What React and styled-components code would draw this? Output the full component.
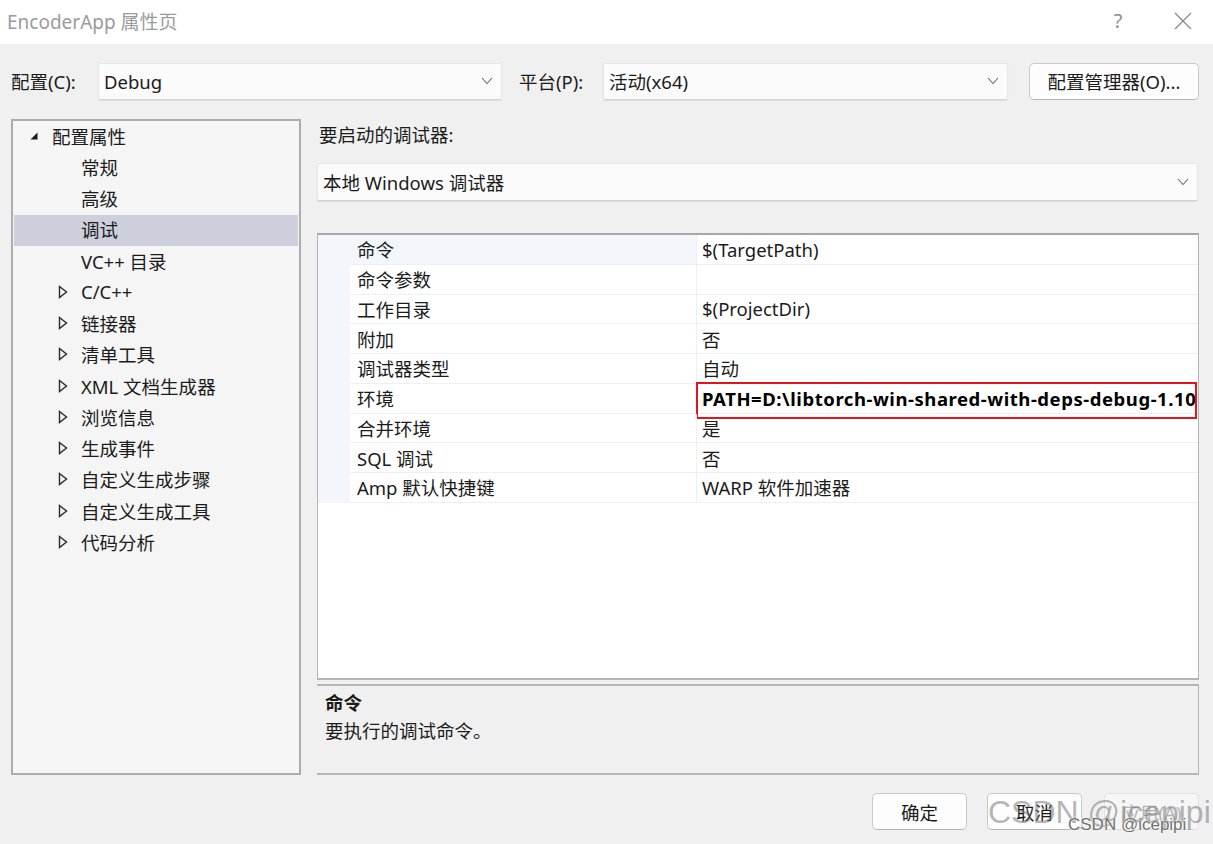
import React from 'react';
import styled, { createGlobalStyle } from 'styled-components';

const GlobalStyle = createGlobalStyle`
  html, body { margin: 0; padding: 0; background: #f0f0f0; }
  body { font-family: "Noto Sans", "Noto Sans CJK SC", sans-serif; }
  * { box-sizing: border-box; }
`;

const Window = styled.div`
  position: relative;
  width: 1213px;
  height: 844px;
  display: flex;
  flex-direction: column;
  overflow: hidden;
  color: #1b1b1b;
  font-size: 18.5px;
  background: #f0f0f0;
`;

const TitleBar = styled.div`
  height: 44px;
  flex-shrink: 0;
  background: #ffffff;
  display: flex;
  align-items: center;
  padding-left: 7px;
  padding-bottom: 3px;
`;

const Title = styled.div`
  flex: 1;
  color: #9b9b9b;
  font-size: 19px;
`;

const TitleButton = styled.div`
  width: ${p => p.$w}px;
  height: 40px;
  display: flex;
  align-items: center;
  justify-content: center;
  color: #8c8c8c;
  font-size: 20px;
`;

const Body = styled.div`
  flex: 1;
  display: flex;
  flex-direction: column;
  padding: 18px 14px 0 11px;
`;

const ConfigRow = styled.div`
  height: 38px;
  display: flex;
  align-items: center;
`;

const FieldLabel = styled.div`
  width: ${p => p.$w}px;
  margin-left: ${p => p.$ml || 0}px;
  white-space: nowrap;
`;

const Select = styled.div`
  width: ${p => p.$w}px;
  height: ${p => p.$h || 37}px;
  background: #fbfbfb;
  border: 1px solid #e6e6e6;
  border-bottom-color: #d2d2d2;
  border-radius: 2px;
  box-shadow: 0 1px 1px rgba(0, 0, 0, 0.08);
  display: flex;
  align-items: center;
  padding: 0 8px 0 5px;
`;

const SelectText = styled.div`
  flex: 1;
  white-space: nowrap;
`;

const PushButton = styled.div`
  width: ${p => p.$w || 95}px;
  height: 37px;
  margin-left: ${p => p.$ml || 0}px;
  border: 1px solid ${p => (p.$disabled ? '#e2e2e2' : '#c9c9c9')};
  border-bottom-color: ${p => (p.$disabled ? '#dadada' : '#b5b5b5')};
  border-radius: 5px;
  background: ${p => (p.$disabled ? '#f6f6f6' : '#fdfdfd')};
  color: ${p => (p.$disabled ? '#b4b4b4' : '#1b1b1b')};
  display: flex;
  align-items: center;
  justify-content: center;
  white-space: nowrap;
`;

const Main = styled.div`
  margin-top: 19px;
  height: 656px;
  display: flex;
  gap: 16px;
`;

const Tree = styled.div`
  width: 290px;
  border: 2px solid #adadad;
  background: #f5f5f5;
  padding: 0 1px 1px;
`;

const TreeRow = styled.div`
  height: 31.25px;
  display: flex;
  align-items: center;
  padding-left: ${p => 10 + p.$level * 29}px;
  padding-bottom: 2px;
  background: ${p => (p.$selected ? '#cdd0dc' : 'transparent')};
  white-space: nowrap;
`;

const Expander = styled.div`
  width: 20px;
  height: 20px;
  margin-right: 8px;
  display: flex;
  align-items: center;
  justify-content: center;
`;

const RightCol = styled.div`
  flex: 1;
  display: flex;
  flex-direction: column;
`;

const SectionLabel = styled.div`
  height: 32px;
  display: flex;
  align-items: center;
  padding-left: 2px;
  padding-bottom: 2px;
`;

const Spacer = styled.div`
  height: ${p => p.$h}px;
  flex-shrink: 0;
`;

const Grid = styled.div`
  height: 447px;
  background: #ffffff;
  border: 1px solid #b4b4b4;
  border-top: 2px solid #a8a8a8;
  border-bottom: 2px solid #b4b4b4;
`;

const PropRow = styled.div`
  height: 29.75px;
  display: grid;
  grid-template-columns: 32px 346px 1fr;
`;

const Gutter = styled.div`
  background: #f3f6fa;
`;

const NameCell = styled.div`
  background: ${p => (p.$active ? '#f3f6fa' : '#ffffff')};
  border-bottom: 1px solid #eceff4;
  display: flex;
  align-items: center;
  padding-left: 7px;
  white-space: nowrap;
`;

const ValueCell = styled.div`
  position: relative;
  border-bottom: 1px solid #eceff4;
  border-left: 1px solid #eceff4;
  display: flex;
  align-items: center;
  padding-left: 5px;
  min-width: 0;
`;

const ValueText = styled.div`
  white-space: nowrap;
  overflow: hidden;
  font-weight: ${p => (p.$bold ? 700 : 400)};
  letter-spacing: ${p => (p.$bold ? '0.55px' : 'normal')};
  color: ${p => (p.$bold ? '#000' : 'inherit')};
  margin-right: ${p => (p.$bold ? 3 : 0)}px;
`;

const Highlight = styled.div`
  position: absolute;
  top: -2px;
  bottom: -6px;
  left: -1px;
  right: 1px;
  border: 2px solid #e3141c;
  pointer-events: none;
`;

const Description = styled.div`
  margin-top: 4px;
  height: 91px;
  border-top: 2px solid #b6b6b6;
  border-bottom: 2px solid #b6b6b6;
  border-right: 1px solid #b6b6b6;
  padding: 2px 8px 0;
`;

const DescLine = styled.div`
  height: 28px;
  display: flex;
  align-items: center;
  font-weight: ${p => (p.$bold ? 700 : 400)};
`;

const Footer = styled.div`
  margin-top: 18px;
  display: flex;
  justify-content: flex-end;
`;

const WatermarkBig = styled.div`
  position: absolute;
  left: 988px;
  top: 796px;
  font-family: "Liberation Sans", sans-serif;
  font-size: 32px;
  line-height: 32px;
  color: rgba(110, 110, 110, 0.5);
  white-space: nowrap;
  pointer-events: none;
`;

const WatermarkSmall = styled.div`
  position: absolute;
  left: 1068px;
  top: 816px;
  font-family: "Liberation Sans", sans-serif;
  font-size: 17px;
  line-height: 17px;
  color: #707070;
  text-shadow: 0 0 2px #fff, 0 0 1px #fff;
  white-space: nowrap;
  pointer-events: none;
`;

const Chevron = () => (
  <svg width="12" height="8" viewBox="0 0 12 8">
    <polyline points="1,1 6,6.5 11,1" fill="none" stroke="#6a6a6a" strokeWidth="1.1" />
  </svg>
);

const CloseIcon = () => (
  <svg width="18" height="18" viewBox="0 0 18 18">
    <path d="M1 1 L17 17 M17 1 L1 17" stroke="#8a8a8a" strokeWidth="1.3" fill="none" />
  </svg>
);

const ExpandedArrow = () => (
  <svg width="10" height="10" viewBox="0 0 10 10">
    <polygon points="8.5,1.5 8.5,8.5 1.5,8.5" fill="#1a1a1a" />
  </svg>
);

const CollapsedArrow = () => (
  <svg width="10" height="14" viewBox="0 0 10 14">
    <polygon points="1.5,1.5 8.5,7 1.5,12.5" fill="none" stroke="#2a2a2a" strokeWidth="1.4" strokeLinejoin="miter" />
  </svg>
);

const treeItems = [
  { label: '配置属性', level: 0, state: 'expanded' },
  { label: '常规', level: 1 },
  { label: '高级', level: 1 },
  { label: '调试', level: 1, selected: true },
  { label: 'VC++ 目录', level: 1 },
  { label: 'C/C++', level: 1, state: 'collapsed' },
  { label: '链接器', level: 1, state: 'collapsed' },
  { label: '清单工具', level: 1, state: 'collapsed' },
  { label: 'XML 文档生成器', level: 1, state: 'collapsed' },
  { label: '浏览信息', level: 1, state: 'collapsed' },
  { label: '生成事件', level: 1, state: 'collapsed' },
  { label: '自定义生成步骤', level: 1, state: 'collapsed' },
  { label: '自定义生成工具', level: 1, state: 'collapsed' },
  { label: '代码分析', level: 1, state: 'collapsed' },
];

const props = [
  { name: '命令', value: '$(TargetPath)', active: true },
  { name: '命令参数', value: '' },
  { name: '工作目录', value: '$(ProjectDir)' },
  { name: '附加', value: '否' },
  { name: '调试器类型', value: '自动' },
  { name: '环境', value: 'PATH=D:\\libtorch-win-shared-with-deps-debug-1.10', highlight: true },
  { name: '合并环境', value: '是' },
  { name: 'SQL 调试', value: '否' },
  { name: 'Amp 默认快捷键', value: 'WARP 软件加速器' },
];

export default function App() {
  return (
    <>
      <GlobalStyle />
      <Window>
        <TitleBar>
          <Title>EncoderApp 属性页</Title>
          <TitleButton $w={70}>?</TitleButton>
          <TitleButton $w={60}><CloseIcon /></TitleButton>
        </TitleBar>
        <Body>
          <ConfigRow>
            <FieldLabel $w={87}>配置(C):</FieldLabel>
            <Select $w={404}>
              <SelectText>Debug</SelectText>
              <Chevron />
            </Select>
            <FieldLabel $w={84} $ml={17}>平台(P):</FieldLabel>
            <Select $w={405}>
              <SelectText>活动(x64)</SelectText>
              <Chevron />
            </Select>
            <PushButton $w={170} $ml={21}>配置管理器(O)...</PushButton>
          </ConfigRow>
          <Main>
            <Tree>
              {treeItems.map(item => (
                <TreeRow key={item.label} $level={item.level} $selected={item.selected}>
                  <Expander>
                    {item.state === 'expanded' && <ExpandedArrow />}
                    {item.state === 'collapsed' && <CollapsedArrow />}
                  </Expander>
                  {item.label}
                </TreeRow>
              ))}
            </Tree>
            <RightCol>
              <SectionLabel>要启动的调试器:</SectionLabel>
              <Spacer $h={12} />
              <Select $w={881} $h={38}>
                <SelectText>本地 Windows 调试器</SelectText>
                <Chevron />
              </Select>
              <Spacer $h={32} />
              <Grid>
                {props.map(p => (
                  <PropRow key={p.name}>
                    <Gutter />
                    <NameCell $active={p.active}>{p.name}</NameCell>
                    <ValueCell>
                      <ValueText $bold={p.highlight}>{p.value}</ValueText>
                      {p.highlight && <Highlight />}
                    </ValueCell>
                  </PropRow>
                ))}
              </Grid>
              <Description>
                <DescLine $bold>命令</DescLine>
                <DescLine>要执行的调试命令。</DescLine>
              </Description>
            </RightCol>
          </Main>
          <Footer>
            <PushButton>确定</PushButton>
            <PushButton $ml={20}>取消</PushButton>
            <PushButton $ml={22} $disabled>应用(A)</PushButton>
          </Footer>
        </Body>
        <WatermarkBig>CSDN @icepipi</WatermarkBig>
        <WatermarkSmall>CSDN @icepipi</WatermarkSmall>
      </Window>
    </>
  );
}
